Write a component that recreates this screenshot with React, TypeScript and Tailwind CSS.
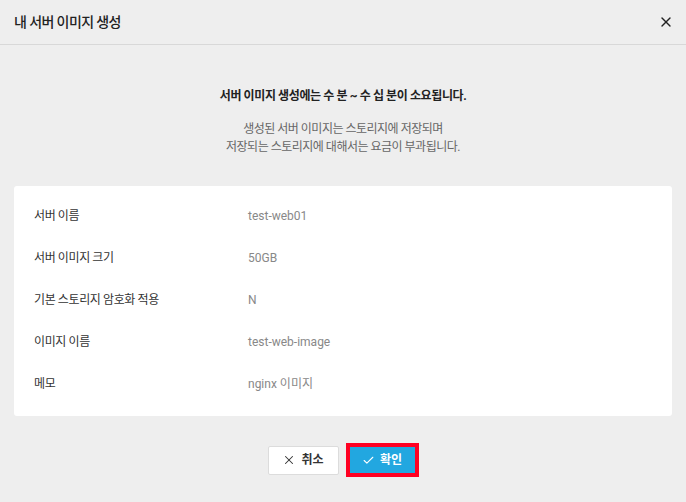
import { Check, X } from "lucide-react";

const rows: { label: string; value: string }[] = [
  { label: "서버 이름", value: "test-web01" },
  { label: "서버 이미지 크기", value: "50GB" },
  { label: "기본 스토리지 암호화 적용", value: "N" },
  { label: "이미지 이름", value: "test-web-image" },
  { label: "메모", value: "nginx 이미지" },
];

export default function App() {
  return (
    <div className="flex h-[502px] w-[686px] flex-col bg-[#eeeeee] font-['Roboto','Noto_Sans_CJK_KR',sans-serif] text-[#222]">
      {/* header */}
      <div className="flex h-[45px] shrink-0 items-center justify-between border-b border-[#d8d8d8] pl-[14px] pr-[12px]">
        <h1 className="text-[14px] font-medium tracking-[-0.6px]">내 서버 이미지 생성</h1>
        <X size={16} strokeWidth={2} className="text-[#222]" />
      </div>

      {/* notice */}
      <div className="flex flex-col items-center pt-[42px] text-center">
        <p className="text-[12px] font-bold leading-[18px] tracking-[-0.4px] text-[#222]">
          서버 이미지 생성에는 수 분 ~ 수 십 분이 소요됩니다.
        </p>
        <p className="mt-[15px] text-[12px] leading-[18px] tracking-[-0.5px] text-[#666]">
          생성된 서버 이미지는 스토리지에 저장되며
          <br />
          저장되는 스토리지에 대해서는 요금이 부과됩니다.
        </p>
      </div>

      {/* info card */}
      <div className="mx-[14px] mt-[30px] rounded-[3px] bg-white px-[20px] pb-[11px] pt-[9px]">
        {rows.map((r) => (
          <div key={r.label} className="flex h-[42px] items-center text-[12px]">
            <span className="w-[214px] tracking-[-0.4px] text-[#333]">{r.label}</span>
            <span className="text-[#888]">{r.value}</span>
          </div>
        ))}
      </div>

      {/* actions */}
      <div className="mt-[27px] flex items-center justify-center gap-[7px]">
        <button className="flex h-[29px] w-[71px] items-center justify-center gap-[5px] rounded-[2px] border border-[#dcdcdc] bg-white text-[12px] font-bold text-[#333]">
          <X size={14} strokeWidth={1.8} />
          취소
        </button>
        <div className="border-[4px] border-[#ff0022] p-0">
          <button className="flex h-[26px] w-[65px] items-center justify-center gap-[5px] bg-[#22a7e0] text-[12px] font-bold text-white">
            <Check size={13} strokeWidth={2} />
            확인
          </button>
        </div>
      </div>
    </div>
  );
}
